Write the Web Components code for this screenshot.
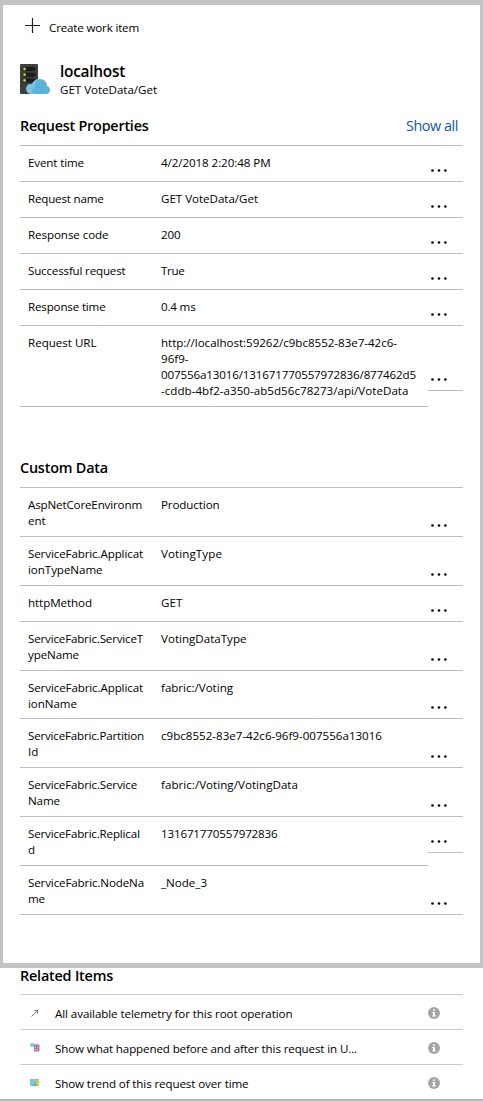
<!DOCTYPE html>
<html lang="en">
<head>
<meta charset="utf-8">
<title>Request details</title>
<style>
html,body{margin:0;padding:0;background:#fff}
body{font-family:"Open Sans","Noto Sans",sans-serif;font-size:11.6px;line-height:16px;color:#000}
</style>
</head>
<body>
<request-blade></request-blade>
<script>
const define = (name, html, setup) => {
  const tpl = document.createElement('template');
  tpl.innerHTML = html;
  customElements.define(name, class extends HTMLElement {
    connectedCallback() {
      if (this.shadowRoot) return;
      this.attachShadow({ mode: 'open' }).appendChild(tpl.content.cloneNode(true));
      if (setup) setup(this, this.shadowRoot);
    }
  });
};

// One line of text, tracked so that it takes the given width.
define('text-line', `<style>:host{display:block;white-space:pre}span{display:inline-block}</style><span><slot></slot></span>`, (el, root) => {
  const span = root.querySelector('span');
  const want = parseFloat(el.getAttribute('w'));
  if (!want) return;
  const fit = () => {
    span.style.letterSpacing = '0px';
    const w = span.getBoundingClientRect().width;
    if (w) span.style.letterSpacing = ((want - w) / el.textContent.length) + 'px';
  };
  fit();
  document.fonts.ready.then(fit);
});

define('more-button', `<style>:host{display:block;height:3px;width:17px}svg{display:block}</style>
<svg width="17" height="3" viewBox="0 0 17 3"><circle cx="1.5" cy="1.5" r="1.3"/><circle cx="8" cy="1.5" r="1.3"/><circle cx="14.4" cy="1.5" r="1.3"/></svg>`);

define('property-row', `<style>
:host{display:grid;grid-template-columns:408px 35px;align-items:start}
.main{display:grid;grid-template-columns:133px 1fr;box-sizing:border-box;height:var(--h);padding:9px 0 0 8px;border-bottom:1px solid #bfbfbf}
.more{display:flex;align-items:flex-end;box-sizing:border-box;height:var(--mh);padding:0 0 9px 3px;border-bottom:1px solid #bfbfbf}
</style><div class="main"><div><slot name="key"></slot></div><div><slot></slot></div></div><div class="more"><more-button></more-button></div>`, el => {
  const h = el.getAttribute('h') || '36';
  el.style.setProperty('--h', h + 'px');
  el.style.setProperty('--mh', (el.getAttribute('mh') || h) + 'px');
});

define('section-title', `<style>
:host{display:flex;justify-content:space-between;box-sizing:border-box;height:28px;font-size:14.4px;line-height:16px;font-weight:550;border-bottom:1px solid var(--line,#bfbfbf)}
::slotted([slot=action]){font-weight:400;color:#1257a8;margin-right:5px}
</style><slot></slot><slot name="action"></slot>`);

define('server-icon', `<style>:host{display:block;width:30px;height:30px}svg{display:block}</style>
<svg width="30" height="30" viewBox="0 0 30 30">
<rect width="18" height="30" rx="1" fill="#3e3e3e"/>
<g fill="#1b1b1b"><rect x="2.500" y="3" width="13" height="4" rx="2"/><rect x="2.500" y="8.700" width="13" height="4" rx="2"/><rect x="2.500" y="14.400" width="13" height="4" rx="2"/></g>
<g fill="#b5d532"><circle cx="4.600" cy="5" r="1.400"/><circle cx="4.600" cy="10.700" r="1.400"/><circle cx="4.600" cy="16.400" r="1.400"/></g>
<path d="M11 30A5 5 0 0 1 6.200 25C6.200 21.500 9 19.500 12 20C13.200 17 16 15 19.500 15C24 15 27 18 27 22C29 22.500 30 24 30 26C30 28.500 28.200 30 26 30Z" fill="#59b4d9"/>
<path d="M11 30A5 5 0 0 1 6.200 25C6.200 21.500 9 19.500 12 20C13.200 17 16 15 19.500 15C16 17 14.500 20 15 23C11.500 24 11.500 28 14 30Z" fill="#7cc4e2"/></svg>`);

define('info-icon', `<style>:host{display:block;width:12px;height:12px}svg{display:block}</style>
<svg width="12" height="12" viewBox="0 0 12 12"><circle cx="6" cy="6" r="6" fill="#a4a5a7"/><path d="M5 2.400h2v1.400H5zM4.300 5H7v3.400h.8v1H4.300v-1H5V6h-.7z" fill="#fff"/></svg>`);

const glyphs = {
  arrow: '<path d="M1.500 8.500 7.500 2.500M4.500 2.500h3v3" fill="none" stroke="#777" stroke-width="1"/>',
  timeline: '<rect x=".3" y=".3" width="3.800" height="3.400" fill="#72c5e5"/><path d="M4 .8h5v1H4z" fill="#b89bc8"/><rect x="4" y="2" width="5.500" height="6.500" fill="#a477b9"/><path d="M5 4h1v1H5zM7.500 3.500h1v1h-1zM5 6h1v1H5zM7 6.500h1v1H7z" fill="#eadff0"/>',
  trend: '<rect x="0" y="1" width="8.500" height="7" fill="#4eb1d4"/><path d="M0 1h8.500L2 8H0z" fill="#7bc8e0"/><path d="M7 2h2L8.300 4.300H10L6 9l.8-3H5.300z" fill="#fcc51c"/>'
};
define('related-item', `<style>
:host{display:flex;box-sizing:border-box;height:35px;padding-top:10px;border-bottom:1px solid var(--line,#ccc)}
:host([last]){border-bottom:0;height:34px}
.glyph{width:10px;height:10px;margin:3px 15px 0 10px}.text{flex:1;margin-top:1px}info-icon{margin:2px 23px 0 0}
</style><svg class="glyph" viewBox="0 0 10 10"></svg><div class="text"><slot></slot></div><info-icon></info-icon>`, (el, root) => {
  root.querySelector('svg').innerHTML = glyphs[el.getAttribute('icon')];
});

const line = (w, t) => `<text-line w="${w > 30 ? w - 1 : w - .4}">${t}</text-line>`;
const row = (keys, vals, h, mh) => `<property-row h="${h}" mh="${mh || h}"><div slot="key">${keys.map(k => line(...k)).join('')}</div>${vals.map(v => line(...v)).join('')}</property-row>`;

define('request-blade', `<style>
:host{display:block;width:483px;height:1101px;box-sizing:border-box;border-bottom:2px solid #b8b8b8;overflow:hidden}
.panel{box-sizing:border-box;width:483px;height:968px;border:solid #c3c3c3;border-width:5px 3px;padding:0 17px}
.command{display:flex;padding:13px 0 0 5px;height:46px;box-sizing:border-box}
.command svg{display:block;margin-right:8px}
.command text-line{margin-top:2px}
.head{display:flex;padding-top:13px;height:54px;gap:10px}
.host{font-size:15.400px;font-weight:550;line-height:20px;margin-top:-2px}
.custom{margin-top:53px}
.related{padding:0 20px}
.related section-title{--line:#ccc;height:27px}
</style>
<div class="panel">
<div class="command"><svg width="16" height="16" viewBox="0 0 16 16"><path d="M0 7.500h15M7.500 0v15" stroke="#222" stroke-width="1.200" fill="none"/></svg>${line(91,'Create work item')}</div>
<div class="head"><server-icon></server-icon><div><div class="host">${line(66,'localhost')}</div>${line(98,'GET VoteData/Get')}</div></div>
<section-title class="request">${line(129.5,'Request Properties')}<text-line slot="action" w="52">Show all</text-line></section-title>
${row([[57,'Event time']],[[110.5,'4/2/2018 2:20:48 PM']],36)}
${row([[76.5,'Request name']],[[98,'GET VoteData/Get']],36)}
${row([[81.5,'Response code']],[[20,'200']],36)}
${row([[98.5,'Successful request']],[[24,'True']],36)}
${row([[78.5,'Response time']],[[35.5,'0.4 ms']],36)}
${row([[69.5,'Request URL']],[[237,'http://localhost:59262/c9bc8552-83e7-42c6-'],[28,'96f9-'],[256,'007556a13016/131671770557972836/877462d5'],[248.5,'-cddb-4bf2-a350-ab5d56c78273/api/VoteData']],81,65)}
<section-title class="custom">${line(89,'Custom Data')}</section-title>
${row([[115,'AspNetCoreEnvironm'],[18,'ent']],[[59.5,'Production']],49)}
${row([[116,'ServiceFabric.Applicat'],[75.5,'ionTypeName']],[[62,'VotingType']],49)}
${row([[65,'httpMethod']],[[22,'GET']],36)}
${row([[116,'ServiceFabric.ServiceT'],[52,'ypeName']],[[86.5,'VotingDataType']],49)}
${row([[116,'ServiceFabric.Applicat'],[50,'ionName']],[[73,'fabric:/Voting']],48)}
${row([[117,'ServiceFabric.Partition'],[11,'Id']],[[222,'c9bc8552-83e7-42c6-96f9-007556a13016']],49)}
${row([[110,'ServiceFabric.Service'],[33,'Name']],[[138,'fabric:/Voting/VotingData']],49)}
${row([[113,'ServiceFabric.ReplicaI'],[8,'d']],[[117.5,'131671770557972836']],49,36)}
${row([[117,'ServiceFabric.NodeNa'],[17,'me']],[[47,'_Node_3']],49)}
</div>
<div class="related">
<section-title>${line(94,'Related Items')}</section-title>
<related-item icon="arrow">${line(238.5,'All available telemetry for this root operation')}</related-item>
<related-item icon="timeline">${line(303,'Show what happened before and after this request in U...')}</related-item>
<related-item icon="trend" last>${line(194.5,'Show trend of this request over time')}</related-item>
</div>`);
</script>
</body>
</html>
